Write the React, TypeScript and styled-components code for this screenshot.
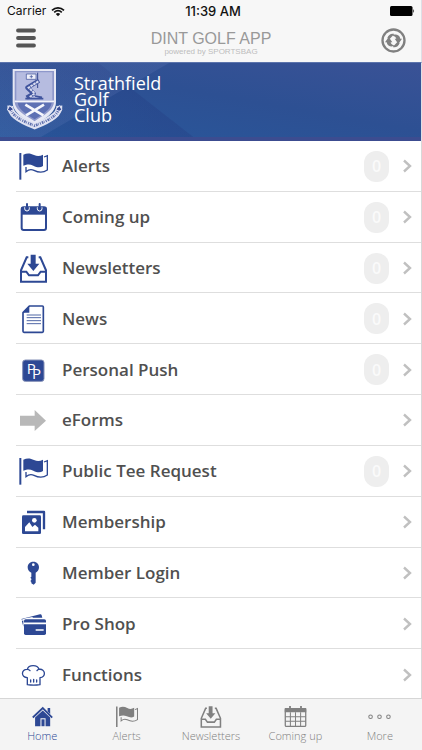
import React from "react";
import styled, { createGlobalStyle } from "styled-components";

const BLUE = "#2d4894";

const GlobalStyle = createGlobalStyle`
  *, *::before, *::after { box-sizing: border-box; }
  body { margin: 0; background: #fff; font-family: "Open Sans", "Noto Sans", sans-serif; }
  button { border: 0; padding: 0; background: none; font: inherit; color: inherit; cursor: pointer; }
  a { color: inherit; text-decoration: none; }
  svg { display: block; flex: none; }
`;

const Screen = styled.div`
  display: flex;
  flex-direction: column;
  height: 100vh;
  background: #f4f4f4;
`;

const TopBar = styled.header`
  flex: none;
  height: 62px;
  background: #f7f7f7;
  border-right: 1px solid #dedfe6;
`;

const StatusBar = styled.div`
  display: grid;
  grid-template-columns: 1fr auto 1fr;
  align-items: center;
  height: 22px;
  padding: 0 6px 0 7px;
  color: #111;
  font-family: Inter, "Liberation Sans", sans-serif;
  font-size: 12px;
  line-height: 16px;
`;

const Carrier = styled.span`
  display: flex;
  align-items: center;
  gap: 5px;
`;

const Clock = styled.span`
  padding-left: 4px;
  font-size: 13px;
  font-weight: 500;
`;

const BatterySlot = styled.span`
  justify-self: end;
`;

const NavBar = styled.div`
  display: grid;
  grid-template-columns: 1fr auto 1fr;
  align-items: center;
  height: 36px;
  padding: 0 15px 0 16px;
`;

const IconButton = styled.button<{ $end?: boolean }>`
  justify-self: ${(p) => (p.$end ? "end" : "start")};
`;

const Titles = styled.div`
  display: flex;
  flex-direction: column;
  align-items: center;
  padding-top: 8px;
  font-family: "Liberation Sans", Arial, sans-serif;
`;

const AppTitle = styled.h1`
  margin: 0;
  color: #999;
  font-size: 16px;
  font-weight: 400;
  line-height: 16px;
`;

const Powered = styled.p`
  margin: 0;
  color: #bdbdbd;
  font-size: 8px;
  line-height: 10px;
`;

const Banner = styled.section`
  display: flex;
  align-items: flex-start;
  gap: 10px;
  flex: none;
  height: 79px;
  padding: 5px 6px 0;
  border-top: 1px solid #5c74ac;
  border-right: 1px solid #dedfe6;
  background:
    linear-gradient(0deg, #3c4c90 0 4px, transparent 4px),
    linear-gradient(150deg, rgba(120, 140, 200, 0.16) 0 84px, transparent 85px),
    linear-gradient(218deg, transparent 0 198px, rgba(36, 60, 130, 0.35) 199px, transparent 340px),
    linear-gradient(190deg, #3a5296 0%, #2d5093 45%, #28589c 100%);
`;

const ClubName = styled.h2`
  margin: 0;
  padding-top: 7px;
  color: #fff;
  font-size: 18px;
  font-weight: 500;
  line-height: 16px;
`;

const Main = styled.main`
  flex: 1;
  min-height: 0;
  overflow: hidden;
  background: #fff;
  border-right: 1px solid #d8d8d8;
`;

const Menu = styled.ul`
  display: grid;
  grid-auto-rows: 1fr;
  height: calc(100% + 2px);
  margin: 0;
  padding: 0 0 0 16px;
  list-style: none;
`;

const MenuItem = styled.li`
  display: grid;
  border-bottom: 1px solid #dedede;
`;

const MenuLink = styled.a`
  display: flex;
  align-items: center;
  padding: 1px 9px 0 2px;
  color: #505050;
`;

const MenuLabel = styled.span`
  flex: 1;
  padding-left: 14px;
  font-size: 17px;
  font-weight: 600;
  line-height: 24px;
`;

const Badge = styled.span`
  display: flex;
  align-items: center;
  justify-content: center;
  width: 25px;
  height: 31px;
  margin-right: 13px;
  border-radius: 12px;
  background: #eee;
  color: #fafafa;
  font-size: 16px;
  font-weight: 600;
`;

const TabBar = styled.nav`
  display: grid;
  grid-template-columns: repeat(5, 1fr);
  flex: none;
  height: 52px;
  border-top: 1px solid #d6d6d6;
  background: #f4f4f4;
`;

const Tab = styled.a<{ $active?: boolean }>`
  display: flex;
  flex-direction: column;
  align-items: center;
  padding-top: 6px;
  color: ${(p) => (p.$active ? BLUE : "#808080")};
  font-size: 11px;
  font-weight: 300;
  line-height: 16px;
`;

type IconName =
  | "flag" | "calendar" | "inbox" | "page" | "push" | "arrow"
  | "photos" | "key" | "cards" | "chef" | "home" | "grid" | "more";

const shapes: Record<IconName, React.ReactNode> = {
  flag: (
    <>
      <path d="M4 6h6v80H4z" fill="currentColor" />
      <path d="M16 11C28 5 38 7 48 12S66 16 75 11V45C66 51 57 49 46 44S28 40 16 44Z" fill="currentColor" />
      <path d="M78 18L88 14V57C75 66 60 64 48 58C40 54 31 56 24 62V48" fill="none" stroke="currentColor" strokeWidth="4" />
    </>
  ),
  calendar: (
    <>
      <rect x="11" y="16" width="73" height="68" rx="6" fill="#fff" stroke="currentColor" strokeWidth="6" />
      <path d="M10 16H85V38H10z" fill="currentColor" />
      <path d="M20 16V20a7 7 0 0 0 14 0V16M58 16V20a7 7 0 0 0 14 0V16" fill="none" stroke="#fff" strokeWidth="3" />
      <path d="M27 6V20M65 6V20" stroke="currentColor" strokeWidth="6" strokeLinecap="round" />
    </>
  ),
  inbox: (
    <>
      <path d="M38 5H53V32H64L46 54L28 32H38z" fill="currentColor" />
      <path d="M31 13H26L9 52V86H84V52L67 13H62M9 56H25L33 67H60L68 56H84" fill="none" stroke="currentColor" strokeWidth="6" />
    </>
  ),
  page: (
    <>
      <path d="M34 6H73Q76 6 76 9V82Q76 85 73 85H18Q15 85 15 82V26z" fill="#fff" stroke="currentColor" strokeWidth="5" strokeLinejoin="round" />
      <path d="M34 6V26H15z" fill="currentColor" />
      <path d="M26 33H69M26 41H69M26 50H69M26 59H69" stroke="currentColor" strokeWidth="2.5" />
    </>
  ),
  push: (
    <>
      <rect x="14" y="15" width="64" height="64" rx="8" fill="currentColor" stroke="#8490b6" strokeWidth="3" />
      <g fill="#fff" fontFamily="Open Sans, sans-serif" fontSize="45">
        <text x="26" y="57">P</text>
        <text x="42" y="71">P</text>
      </g>
    </>
  ),
  arrow: <path d="M6 32H50V15L84 47L50 78V62H6z" fill="#b8b8b8" />,
  photos: (
    <>
      <path d="M27 15H78V67" fill="none" stroke="currentColor" strokeWidth="7" strokeLinejoin="round" />
      <rect x="12" y="25" width="57" height="56" rx="4" fill="currentColor" />
      <circle cx="49" cy="40" r="7" fill="#fff" />
      <path d="M21 73V60L34 46L43 60L51 53L61 62V73z" fill="#fff" />
    </>
  ),
  key: (
    <>
      <path d="M46 11C57 11 63 19 63 28C63 36 59 41 53 44V74L47 80L40 76V72L37 69L40 66V62L37 59L40 56V44C33 41 29 36 29 28C29 19 35 11 46 11z" fill="currentColor" />
      <circle cx="46" cy="20" r="4" fill="#fff" />
    </>
  ),
  cards: (
    <>
      <path d="M10 30L66 16Q70 15 71 19L73 26H30L16 30V53z" fill="currentColor" />
      <path d="M9 34L44 26" stroke="#fff" strokeWidth="4" />
      <rect x="18" y="31" width="66" height="47" rx="5" fill="currentColor" />
      <path d="M18 43H84M53 63H77" stroke="#fff" strokeWidth="5" />
    </>
  ),
  chef: (
    <g fill="none" stroke="currentColor" strokeWidth="4" strokeLinejoin="round" strokeLinecap="round">
      <path d="M28 74V53C8 53 9 27 28 28C32 14 58 13 63 28C83 25 85 52 66 53V74Q47 77 28 74z" />
      <path d="M38 60V66M47 58V66M56 60V66M28 28Q33 28 36 32M63 28Q59 28 57 32" />
    </g>
  ),
  home: (
    <>
      <path d="M7 49L46 12L83 49" fill="none" stroke="currentColor" strokeWidth="7" />
      <path d="M65 12H75V35L65 25z" fill="currentColor" />
      <path d="M16 49L46 22L75 49V83H57V52H37V83H16z" fill="currentColor" />
      <rect x="41" y="56" width="12" height="27" fill="currentColor" />
    </>
  ),
  grid: (
    <>
      <rect x="5" y="14" width="80" height="70" rx="4" fill="none" stroke="currentColor" strokeWidth="5" />
      <path d="M3 12H87V28H3zM20 4H27V16H20zM63 4H70V16H63z" fill="currentColor" />
      <path d="M5 46H85M5 64H85M25 28V84M45 28V84M65 28V84" stroke="currentColor" strokeWidth="4" />
    </>
  ),
  more: (
    <g fill="none" stroke="currentColor" strokeWidth="4">
      <circle cx="10" cy="46" r="7" />
      <circle cx="45" cy="46" r="7" />
      <circle cx="80" cy="46" r="7" />
    </g>
  ),
};

const Glyph = ({ name, size, color }: { name: IconName; size: number; color?: string }) => (
  <svg width={size} height={size} viewBox="0 0 90 90" color={color} aria-hidden="true">
    {shapes[name]}
  </svg>
);

const Chevron = () => (
  <svg width="10" height="14" viewBox="0 0 10 14" aria-hidden="true">
    <path d="M2 1.500L8 7L2 12.500" fill="none" stroke="#c0c0c0" strokeWidth="2.4" />
  </svg>
);

const Crest = () => (
  <svg width="58" height="62" viewBox="18 24 174 186" role="img" aria-label="Club crest">
    <path d="M38 27H168V126C168 162 126 180 104 196C80 180 38 162 38 126z" fill="#e6e8f4" />
    <path d="M44 33H162V124C162 154 125 168 104 184C82 168 44 154 44 124z" fill="#8e98cb" />
    <path d="M49 37H157V121H49z" fill="#b6bce0" />
    <path d="M53 128H155C151 153 122 165 104 178C84 165 56 151 53 128z" fill="#5d70b4" />
    <path d="M44 124H162" stroke="#f2f3fa" strokeWidth="5" />
    <path d="M76 134L130 166M132 134L78 166" stroke="#f5f6fc" strokeWidth="8" />
    <path d="M79 42H108V58H79z" fill="#eff0fa" stroke="#364c96" strokeWidth="2" />
    <path d="M94 45V55M89 50H99" stroke="#364c96" strokeWidth="2" />
    <path d="M113 38V84" stroke="#33478f" strokeWidth="3" />
    <path d="M117 62L82 83L101 101L80 113" fill="none" stroke="#40549d" strokeWidth="13" strokeLinejoin="round" />
    <path d="M115 64L86 83L104 100L88 112" fill="none" stroke="#d9dcef" strokeWidth="6" strokeDasharray="8 2" />
    <path d="M76 116H130M105 108L126 112" stroke="#40549d" strokeWidth="5" />
    <path d="M31 137C29 160 50 177 104 199C158 177 180 160 178 137" fill="none" stroke="#dfe2f2" strokeWidth="18" />
    <path d="M32 140C31 161 52 178 104 197C156 178 178 161 176 140" fill="none" stroke="#5d6fad" strokeWidth="8" strokeDasharray="3 3 5 2 2 4" />
    <path d="M22 150L29 137L41 148L31 154zM186 150L179 137L167 148L177 154z" fill="#3b4e98" stroke="#e3e5f4" strokeWidth="3" />
  </svg>
);

const items: { label: string; icon: IconName; count?: number }[] = [
  { label: "Alerts", icon: "flag", count: 0 },
  { label: "Coming up", icon: "calendar", count: 0 },
  { label: "Newsletters", icon: "inbox", count: 0 },
  { label: "News", icon: "page", count: 0 },
  { label: "Personal Push", icon: "push", count: 0 },
  { label: "eForms", icon: "arrow" },
  { label: "Public Tee Request", icon: "flag", count: 0 },
  { label: "Membership", icon: "photos" },
  { label: "Member Login", icon: "key" },
  { label: "Pro Shop", icon: "cards" },
  { label: "Functions", icon: "chef" },
];

const tabs: { label: string; icon: IconName; active?: boolean }[] = [
  { label: "Home", icon: "home", active: true },
  { label: "Alerts", icon: "flag" },
  { label: "Newsletters", icon: "inbox" },
  { label: "Coming up", icon: "grid" },
  { label: "More", icon: "more" },
];

export default function App() {
  return (
    <Screen>
      <GlobalStyle />
      <TopBar>
        <StatusBar>
          <Carrier>
            Carrier
            <svg width="14" height="11" viewBox="0 0 14 11" aria-label="Wi-Fi">
              <path d="M1 4.3C4.5 1 9.5 1 13 4.3M3.2 6.4C5.5 4.3 8.5 4.3 10.8 6.4" fill="none" stroke="#111" strokeWidth="1.7" />
              <path d="M4.8 7.9Q7 6.2 9.2 7.9L7 10.2z" fill="#111" />
            </svg>
          </Carrier>
          <Clock>11:39 AM</Clock>
          <BatterySlot>
            <svg width="25" height="10" viewBox="0 0 25 10" aria-label="Battery full">
              <rect width="22.5" height="10" rx="1.5" fill="#000" />
              <path d="M23.3 3Q25 5 23.3 7z" fill="#000" />
            </svg>
          </BatterySlot>
        </StatusBar>
        <NavBar>
          <IconButton aria-label="Menu">
            <svg width="20" height="24" viewBox="0 0 20 24">
              <path d="M2 2.5H18M2 10H18M2 17.5H18" stroke="#555" strokeWidth="3.8" strokeLinecap="round" />
            </svg>
          </IconButton>
          <Titles>
            <AppTitle>DINT GOLF APP</AppTitle>
            <Powered>powered by SPORTSBAG</Powered>
          </Titles>
          <IconButton $end aria-label="Refresh">
            <svg width="25" height="25" viewBox="0 0 75 75">
              <circle cx="37.5" cy="37.5" r="33" fill="none" stroke="#808080" strokeWidth="7" />
              <path d="M12 43L23 27L34 43H29C30 48 34 51 40 52C36 58 19 57 17 43z" fill="#808080" />
              <path d="M63 32L52 48L41 32H46C45 27 41 24 35 23C39 17 56 18 58 32z" fill="#808080" />
              <path d="M19 30C22 20 31 15 40 18L26 33zM56 45C53 55 44 60 35 57L49 42z" fill="#808080" />
            </svg>
          </IconButton>
        </NavBar>
      </TopBar>
      <Banner>
        <Crest />
        <ClubName>
          Strathfield
          <br />
          Golf
          <br />
          Club
        </ClubName>
      </Banner>
      <Main>
        <Menu>
          {items.map((item) => (
            <MenuItem key={item.label}>
              <MenuLink href="#">
                <Glyph name={item.icon} size={30} color={BLUE} />
                <MenuLabel>{item.label}</MenuLabel>
                {item.count !== undefined && <Badge>{item.count}</Badge>}
                <Chevron />
              </MenuLink>
            </MenuItem>
          ))}
        </Menu>
      </Main>
      <TabBar>
        {tabs.map((tab) => (
          <Tab key={tab.label} href="#" $active={tab.active} aria-current={tab.active ? "page" : undefined}>
            <Glyph name={tab.icon} size={23} />
            {tab.label}
          </Tab>
        ))}
      </TabBar>
    </Screen>
  );
}
